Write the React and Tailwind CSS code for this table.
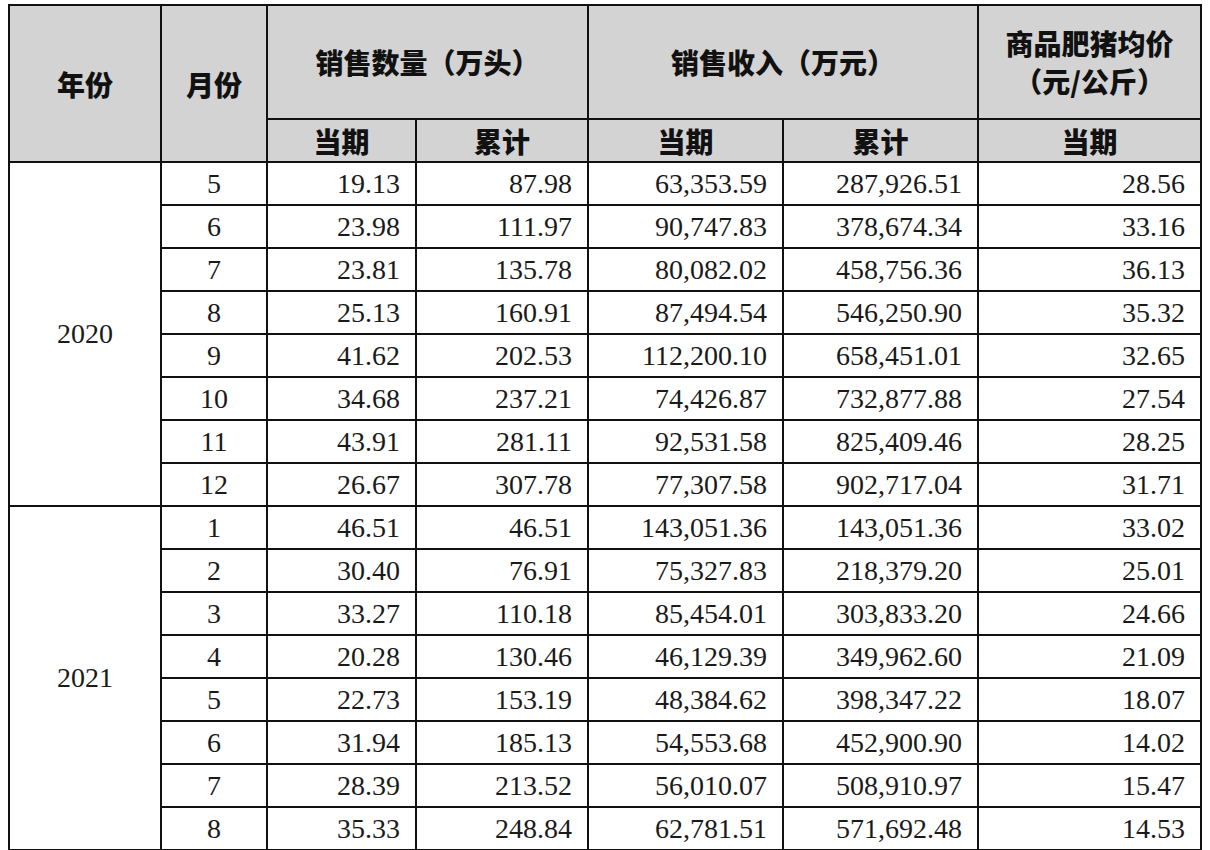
const rows2020 = [
  ["5", "19.13", "87.98", "63,353.59", "287,926.51", "28.56"],
  ["6", "23.98", "111.97", "90,747.83", "378,674.34", "33.16"],
  ["7", "23.81", "135.78", "80,082.02", "458,756.36", "36.13"],
  ["8", "25.13", "160.91", "87,494.54", "546,250.90", "35.32"],
  ["9", "41.62", "202.53", "112,200.10", "658,451.01", "32.65"],
  ["10", "34.68", "237.21", "74,426.87", "732,877.88", "27.54"],
  ["11", "43.91", "281.11", "92,531.58", "825,409.46", "28.25"],
  ["12", "26.67", "307.78", "77,307.58", "902,717.04", "31.71"],
];

const rows2021 = [
  ["1", "46.51", "46.51", "143,051.36", "143,051.36", "33.02"],
  ["2", "30.40", "76.91", "75,327.83", "218,379.20", "25.01"],
  ["3", "33.27", "110.18", "85,454.01", "303,833.20", "24.66"],
  ["4", "20.28", "130.46", "46,129.39", "349,962.60", "21.09"],
  ["5", "22.73", "153.19", "48,384.62", "398,347.22", "18.07"],
  ["6", "31.94", "185.13", "54,553.68", "452,900.90", "14.02"],
  ["7", "28.39", "213.52", "56,010.07", "508,910.97", "15.47"],
  ["8", "35.33", "248.84", "62,781.51", "571,692.48", "14.53"],
];

const head =
  "border-2 border-[#111] bg-[#d3d3d3] text-center font-black text-[28px] leading-[34px] p-0 text-[#111]";
const cell = "border-2 border-[#111] text-[28px] leading-[34px] p-0 text-[#1a1a1a]";

const YearBlock = ({ year, rows }) =>
  rows.map((r, i) => (
    <tr key={year + r[0]} className="h-[43px]">
      {i === 0 && (
        <td rowSpan={rows.length} className={cell + " text-center"}>
          {year}
        </td>
      )}
      <td className={cell + " text-center"}>{r[0]}</td>
      {r.slice(1).map((v, j) => (
        <td key={j} className={cell + " text-right pr-[15px]"}>
          {v}
        </td>
      ))}
    </tr>
  ));

export default function App() {
  return (
    <div className="w-[1210px] h-[850px] bg-white pt-[4px] pl-[8px]">
      <table
        className="table-fixed border-collapse w-[1194px]"
        style={{ fontFamily: '"Liberation Serif", "Noto Sans CJK SC", serif' }}
      >
        <colgroup>
          <col className="w-[152px]" />
          <col className="w-[106px]" />
          <col className="w-[149px]" />
          <col className="w-[172px]" />
          <col className="w-[195px]" />
          <col className="w-[195px]" />
          <col className="w-[223px]" />
        </colgroup>
        <thead style={{ fontFamily: '"Noto Sans CJK SC", sans-serif' }}>
          <tr className="h-[114px]">
            <th rowSpan={2} className={head}>
              年份
            </th>
            <th rowSpan={2} className={head}>
              月份
            </th>
            <th colSpan={2} className={head}>
              销售数量（万头）
            </th>
            <th colSpan={2} className={head}>
              销售收入（万元）
            </th>
            <th className={head + " leading-[38px]"}>
              商品肥猪均价
              <br />
              （元/公斤）
            </th>
          </tr>
          <tr className="h-[43px]">
            <th className={head}>当期</th>
            <th className={head}>累计</th>
            <th className={head}>当期</th>
            <th className={head}>累计</th>
            <th className={head}>当期</th>
          </tr>
        </thead>
        <tbody>
          <YearBlock year="2020" rows={rows2020} />
          <YearBlock year="2021" rows={rows2021} />
        </tbody>
      </table>
    </div>
  );
}
